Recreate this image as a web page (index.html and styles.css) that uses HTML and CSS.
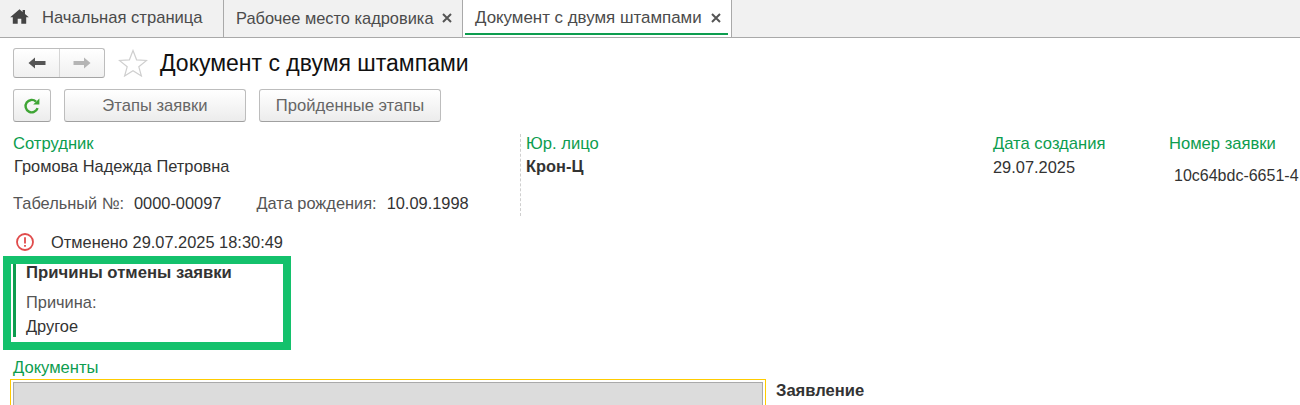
FILE: index.html
```html
<!DOCTYPE html>
<html lang="ru">
<head>
<meta charset="utf-8">
<title>Документ с двумя штампами</title>
<link rel="stylesheet" href="styles.css">
</head>
<body>
<nav class="tabs">
  <div class="tab tab-home">
    <svg class="home-icon" width="19" height="15" viewBox="0 0 19 15"><path d="M9.5 0.3 L12.6 3 V1 H15 V5 L18.8 8.3 H16.2 V14.7 H11.3 V9.7 H7.7 V14.7 H2.8 V8.3 H0.2 Z" fill="#444"/></svg>
    <span>Начальная страница</span>
  </div>
  <div class="tab tab-work">
    <span>Рабочее место кадровика</span>
    <svg class="close" width="10" height="10" viewBox="0 0 10 10"><path d="M1 1 L9 9 M9 1 L1 9" stroke="#555" stroke-width="2"/></svg>
  </div>
  <div class="tab tab-active">
    <span>Документ с двумя штампами</span>
    <svg class="close" width="10" height="10" viewBox="0 0 10 10"><path d="M1 1 L9 9 M9 1 L1 9" stroke="#555" stroke-width="2"/></svg>
  </div>
</nav>

<main class="page">
  <header class="title-row">
    <div class="nav-group">
      <button class="nav-btn nav-back"><svg width="18" height="12" viewBox="0 0 18 12"><path d="M0.5 6 L7 0.5 V4 H17.5 V8 H7 V11.5 Z" fill="#555"/></svg></button>
      <button class="nav-btn"><svg width="18" height="12" viewBox="0 0 18 12"><path d="M17.5 6 L11 0.5 V4 H0.5 V8 H11 V11.5 Z" fill="#b5b5b5"/></svg></button>
    </div>
    <svg class="star" width="30" height="28" viewBox="0 0 30 28"><path d="M15 1.5 L18.6 10.8 L28.6 11.4 L20.8 17.7 L23.4 27 L15 21.7 L6.6 27 L9.2 17.7 L1.4 11.4 L11.4 10.8 Z" fill="#fff" stroke="#cfcfcf" stroke-width="1.2"/></svg>
    <h1 class="title">Документ с двумя штампами</h1>
  </header>

  <div class="toolbar">
    <button class="btn btn-icon"><svg width="18" height="18" viewBox="0 0 18 18"><path d="M14.6 11.2 A6.2 6.2 0 1 1 13 4.6" fill="none" stroke="#3fa535" stroke-width="2.4"/><path d="M10.2 7.6 H16.4 V1.4 Z" fill="#3fa535"/></svg></button>
    <button class="btn btn-wide">Этапы заявки</button>
    <button class="btn btn-wide">Пройденные этапы</button>
  </div>

  <section class="fields">
    <div class="col col-employee">
      <div class="label">Сотрудник</div>
      <div class="value">Громова Надежда Петровна</div>
      <div class="meta">
        <span class="muted">Табельный №:</span><span class="meta-val">0000-00097</span>
        <span class="muted meta-second">Дата рождения:</span><span class="meta-val">10.09.1998</span>
      </div>
    </div>
    <div class="col col-org">
      <div class="label">Юр. лицо</div>
      <div class="value strong">Крон-Ц</div>
    </div>
    <div class="col col-date">
      <div class="label">Дата создания</div>
      <div class="value value-date">29.07.2025</div>
    </div>
    <div class="col col-num">
      <div class="label">Номер заявки</div>
      <div class="value value-num">10c64bdc-6651-4</div>
    </div>
  </section>

  <div class="status">
    <svg width="18" height="18" viewBox="0 0 18 18"><circle cx="9" cy="9" r="8" fill="none" stroke="#e04b4b" stroke-width="1.8"/><path d="M9 4.2 V10.4 M9 12 V13.8" stroke="#e04b4b" stroke-width="1.8"/></svg>
    <span>Отменено 29.07.2025 18:30:49</span>
  </div>

  <section class="reason-frame">
    <div class="reason">
      <div class="reason-title">Причины отмены заявки</div>
      <div class="reason-label">Причина:</div>
      <div class="reason-value">Другое</div>
    </div>
  </section>

  <div class="label docs-label">Документы</div>
  <section class="docs">
    <div class="docs-focus"><div class="docs-list"></div></div>
    <div class="docs-title">Заявление</div>
  </section>
</main>
</body>
</html>
```

FILE: styles.css
```css
* { box-sizing: border-box; }
html, body { margin: 0; height: 405px; overflow: hidden; background: #fff; }
body { font: 16.4px/18px "Liberation Sans", Arial, sans-serif; color: #333; }

.tabs { display: flex; height: 38px; background: #f1f1f1; border-bottom: 1px solid #a9a9a9; font-size: 16.6px; }
.tab { display: flex; align-items: center; height: 37px; border-right: 1px solid #a9a9a9; padding-bottom: 2px; color: #4b4b4b; white-space: nowrap; }
.tab-home { width: 224px; padding-left: 10px; gap: 13px; }
.home-icon { margin-top: -3px; }
.tab-work { width: 239px; padding-left: 12px; gap: 8px; font-size: 16.4px; }
.tab-active { width: 269px; padding-left: 12px; gap: 9px; background: #fff; position: relative; font-size: 16.9px; }
.tab-active::after { content: ""; position: absolute; left: 2px; right: 3px; bottom: 2px; height: 2px; background: #0d9d4f; }
.close { flex: none; }

.page { padding: 10px 0 0 13px; }

.title-row { display: flex; align-items: center; height: 30px; }
.nav-group { display: flex; width: 92px; height: 30px; border: 1px solid #bdbdbd; border-bottom-color: #a5a5a5; border-radius: 3px; background: linear-gradient(#fff, #f0f0f0); }
.nav-btn { flex: 1; padding: 0; border: 0; background: none; display: flex; align-items: center; justify-content: center; }
.nav-back { flex: none; width: 46px; border-right: 1px solid #d5d5d5; }
.star { margin-left: 13px; }
.title { margin: 0 0 0 12px; font-size: 23px; line-height: 30px; font-weight: 400; color: #111; white-space: nowrap; }

.toolbar { display: flex; gap: 13px; margin-top: 11px; }
.btn { height: 33px; padding: 0; border: 1px solid #bdbdbd; border-bottom-color: #a0a0a0; border-radius: 3px; background: linear-gradient(#fff, #ececec); font: inherit; font-size: 16.6px; color: #666; display: flex; align-items: center; justify-content: center; }
.btn-icon { width: 38px; }
.btn-wide { width: 182px; }

.fields { display: flex; margin-top: 12px; height: 82px; }
.col { flex: none; }
.col-employee { width: 507px; }
.col-org { width: 473px; border-left: 1px dashed #cfcfcf; padding-left: 5px; }
.col-date { width: 176px; }
.col-num { width: 131px; white-space: nowrap; overflow: hidden; }
.label { color: #0d9d4f; line-height: 18px; font-size: 16.6px; }
.fields .label { padding-top: 1px; height: 19px; }
.value { margin-top: 4px; color: #333; padding-left: 1px; }
.col-org .value, .col-date .value { padding-left: 0; }
.value-date { padding-top: 1px; }
.value-num { margin-top: 14px; padding-left: 5px; font-size: 16px; }
.strong { font-weight: 700; }
.meta { display: flex; margin-top: 19px; }
.muted { color: #555; }
.meta-val { margin-left: 10px; }
.meta-second { margin-left: 35px; }

.status { display: flex; align-items: center; gap: 17px; margin: 17px 0 0 3px; height: 18px; }

.reason-frame { width: 288px; height: 94px; margin: 5px 0 0 -10px; border: 8px solid #14c16c; }
.reason { height: 73px; margin-left: 2px; border-left: 3px solid #0d9d4f; padding-left: 10px; }
.reason-title { font-weight: 700; font-size: 16.7px; }
.reason-label { margin-top: 11px; color: #555; }
.reason-value { margin-top: 6px; }

.docs-label { margin-top: 9px; }
.docs { display: flex; margin-top: 2px; margin-left: -3px; }
.docs-focus { width: 756px; height: 40px; border: 1px solid #fc0; padding: 2px; }
.docs-list { height: 100%; background: #dcdcdc; border: 1px solid #a9a9a9; }
.docs-title { margin: 3px 0 0 10px; font-weight: 700; font-size: 16.6px; }
```
